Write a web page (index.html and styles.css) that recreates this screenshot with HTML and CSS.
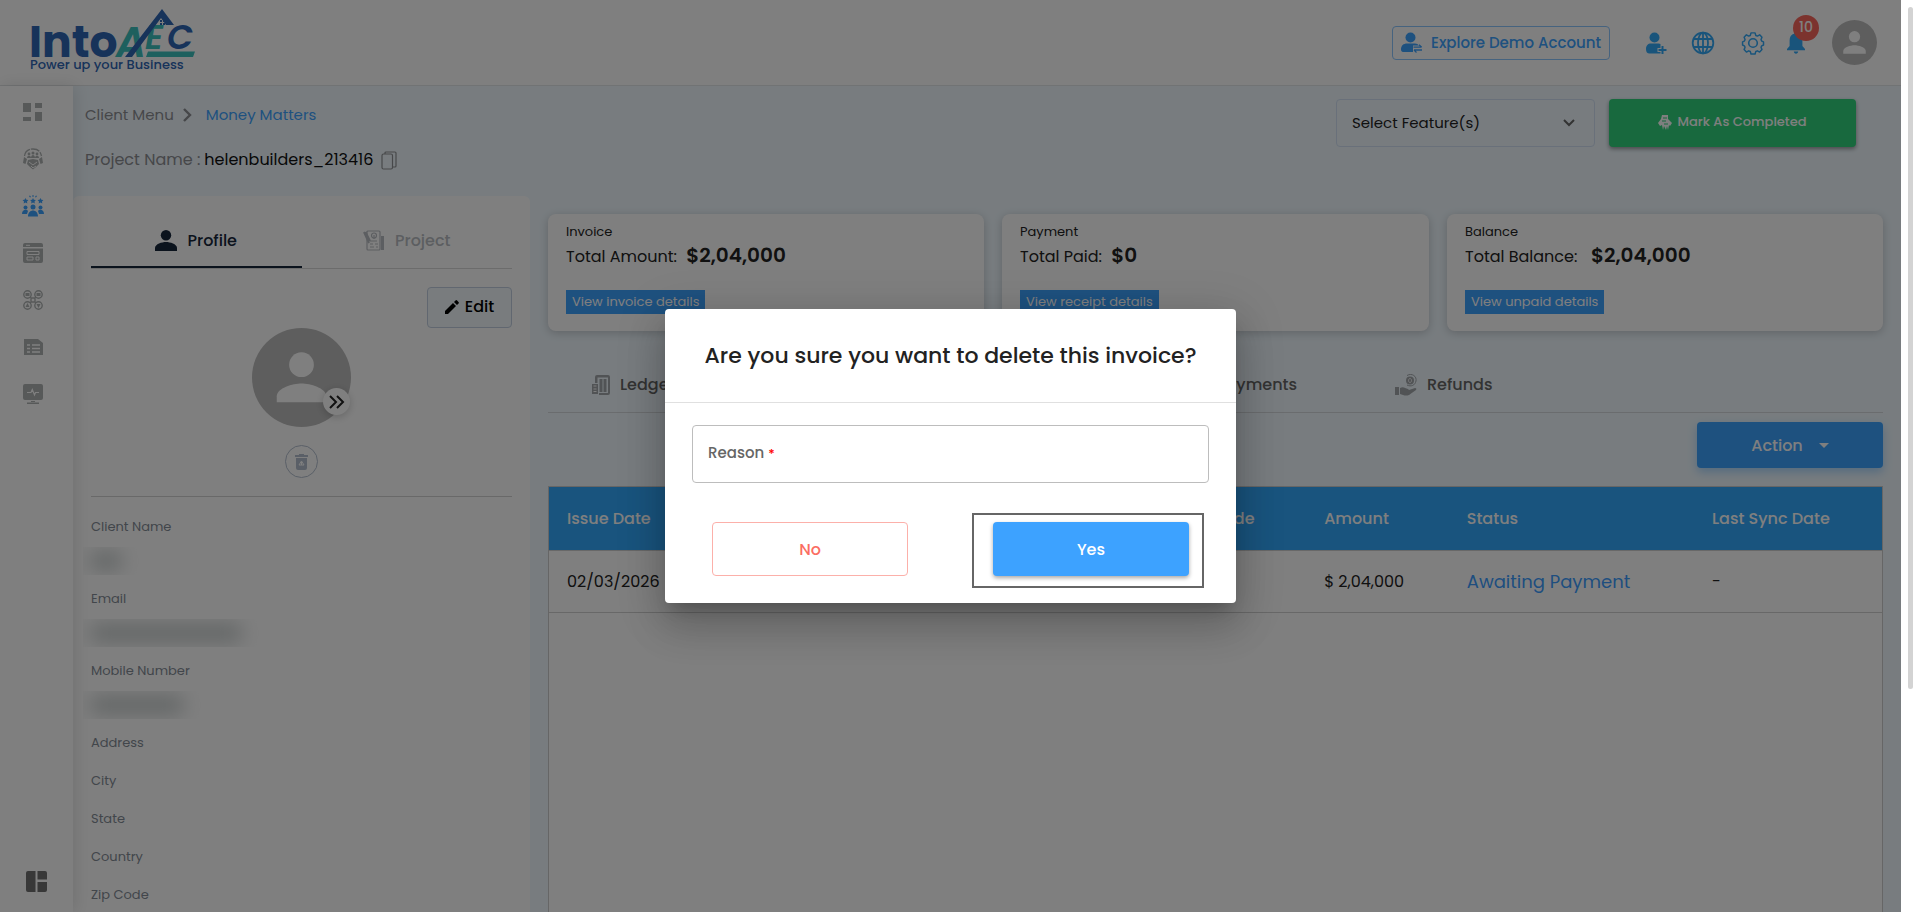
FILE: index.html
```html
<!DOCTYPE html>
<html lang="en">
<head>
    <meta charset="UTF-8">
    <meta name="viewport" content="width=device-width, initial-scale=1.0">
    <title>Money Matters</title>
    <link rel="stylesheet" href="styles.css">
</head>
<body>
    <div class="app">
        <header class="top-header">
            <a href="#" class="logo" aria-label="IntoAEC">
                <svg width="170" height="66" viewBox="0 0 170 66">
                    <text x="0" y="49" class="logo-into">Into</text>
                    <g class="logo-aec">
                        <text x="87" y="49" class="teal">A</text>
                        <text x="116" y="41" class="teal small">E</text>
                        <text x="138" y="41" class="blue small">C</text>
                    </g>
                    <path d="M119 43.500h47l-2 5.500h-47z" fill="#3cc0bd"/>
                    <path d="M96 49L133 1l12 16h-8l-5-7-29 39z" fill="#2f66b4"/>
                    <path d="M131 12h2v2h-2zM134 12h2v2h-2zM131 15h2v2h-2zM134 15h2v2h-2z" fill="#2f66b4"/>
                    <text x="1" y="61" class="logo-tagline">Power up your Business</text>
                </svg>
            </a>
            <button class="demo-btn">
                <svg width="22" height="22" viewBox="0 0 22 22" fill="currentColor"><circle cx="9.500" cy="5.500" r="5"/><path d="M0 17.500c0-4 2.500-6 6-6h8c2 0 3 .8 3.800 2H12v6.500H2c-1.200 0-2-1-2-2.500z"/><path d="M12.500 15.200h8M18 12.800l2.700 2.400M21 18h-8M15.500 20.500L13 18" stroke="currentColor" stroke-width="1.300" fill="none"/></svg>
                Explore Demo Account
            </button>
            <nav class="header-icons">
                <button class="icon-btn" aria-label="Add user"><svg width="22" height="22" viewBox="0 0 22 22" fill="currentColor"><circle cx="9.500" cy="5.500" r="5"/><path d="M1 17c0-3.500 2-5.500 5-5.500h7.500c.8 0 1.500.2 2 .6V16h-3v4h3v1.500H4.500C2.200 21.500 1 20 1 17z"/><path d="M17.500 14v8M13.500 18h8" stroke="currentColor" stroke-width="2"/></svg></button>
                <button class="icon-btn" aria-label="Language"><svg width="24" height="24" viewBox="0 0 24 24" fill="none" stroke="currentColor" stroke-width="1.800"><circle cx="12" cy="12" r="10.300"/><ellipse cx="12" cy="12" rx="5" ry="10.300"/><path d="M12 1.700v20.600M2.800 8h18.400M2.800 16h18.400"/></svg></button>
                <button class="icon-btn gear" aria-label="Settings"><svg width="24" height="24" viewBox="0 0 24 24" fill="none" stroke="currentColor" stroke-width="1.600"><circle cx="12" cy="12" r="4.300"/><path d="M9.800 1.500h4.400l.8 2.800 1.700.7 2.500-1.400 2.500 2.700-1 2.500.7 1.600 2 .9v3.400l-2 .9-.7 1.600 1 2.500-2.500 2.700-2.500-1.400-1.700.7-.8 2.800H9.800L9 21.700 7.300 21l-2.500 1.400-2.500-2.700 1-2.500-.7-1.600-2-.9v-3.400l2-.9.700-1.600-1-2.500 2.500-2.700L7.300 5 9 4.300z" transform="translate(1 .5) scale(.92)" stroke-linejoin="round"/></svg></button>
                <button class="icon-btn bell" aria-label="Notifications">
                    <svg width="20" height="22" viewBox="0 0 20 22" fill="currentColor"><path d="M10 0c-1 0-1.600.7-1.600 1.600C5 2.400 3.600 5 3.600 8.500V14L1 17v1.300h18V17l-2.600-3V8.500c0-3.500-1.400-6.100-4.800-6.900C11.600.7 11 0 10 0zM7.800 19.600c0 1.200 1 2.100 2.200 2.100s2.200-.9 2.200-2.100z"/></svg>
                    <span class="badge">10</span>
                </button>
                <button class="avatar" aria-label="Account"><svg width="45" height="45" viewBox="0 0 100 100"><circle cx="50" cy="50" r="50" fill="#bdbdbd"/><circle cx="50" cy="37" r="12.500" fill="#fff"/><path d="M25 75v-6c0-8.500 16.500-13 25-13s25 4.500 25 13v6z" fill="#fff"/></svg></button>
            </nav>
        </header>

        <div class="body-row">
            <aside class="sidebar">
                <a href="#" aria-label="Dashboard"><svg width="20" height="20" viewBox="0 0 20 20"><path d="M0 1h8v9H0zM12 1h7v5h-7zM0 15h8v4H0zM12 10h7v9h-7z"/></svg></a>
                <a href="#" aria-label="Leads"><svg width="20" height="22" viewBox="0 0 20 22"><path d="M1.500 8C2 3.500 5.500 1 10 1s7.500 2 8.500 7" fill="none" stroke="currentColor" stroke-width="1.300" stroke-dasharray="9 1"/><circle cx="6" cy="6" r="1.400"/><circle cx="10" cy="5" r="1.500"/><circle cx="14" cy="6" r="1.400"/><path d="M4 10c0-3 4-3 4 0zM8 10c0-4 4-4 4 0zM12 10c0-3 4-3 4 0zM1 9l3 2-1.500 5L0 15zM19 9l-3 2 1.500 5 2.500-1zM5 12l5-1 5 1 1 4-3 3-3 2.500L7 19l-3-3z"/><path d="M6 14l4 3 4-3M8 18l2 2 3-2" stroke="#fff" fill="none"/></svg></a>
                <a href="#" class="active" aria-label="Clients"><svg width="22" height="22" viewBox="0 0 22 22"><path d="M3.500 3l.9 1.800 2 .3L5 6.500l.3 2-1.800-1-1.800 1 .3-2L.5 5.100l2-.3zM11 3l.9 1.800 2 .3-1.400 1.400.3 2-1.800-1-1.800 1 .3-2-1.400-1.400 2-.3zM18.500 3l.9 1.800 2 .3L20 6.500l.3 2-1.800-1-1.800 1 .3-2-1.500-1.400 2-.3zM10.500 0h1v2h-1zM7 1l1-.5 1 1.500-1 .5zM14 .5l1 .5-1 1.500-1-.5z"/><circle cx="3.500" cy="12.500" r="2"/><circle cx="18.500" cy="12.500" r="2"/><circle cx="11" cy="12" r="2.500"/><path d="M0 19c0-5 5-5 6-3l-1 3zM22 19c0-5-5-5-6-3l1 3zM6 21.500c0-8 10-8 10 0z"/></svg></a>
                <a href="#" aria-label="Pages"><svg width="20" height="20" viewBox="0 0 20 20"><path d="M2 0h16q2 0 2 2v2H0V2q0-2 2-2zM0 5.500h20V18q0 2-2 2H2q-2 0-2-2z"/><path d="M4 8.500h12v3H4zM4 14h6v3H4zM13 14h3v3h-3zM3 2.300h4" fill="none" stroke="#fff"/></svg></a>
                <a href="#" aria-label="Teams"><svg width="20" height="20" viewBox="0 0 20 20"><g fill="none" stroke="currentColor" stroke-width="1.400"><circle cx="4.500" cy="4.500" r="3.700"/><circle cx="15.500" cy="4.500" r="3.700"/><circle cx="4.500" cy="15.500" r="3.700"/><circle cx="15.500" cy="15.500" r="3.700"/><path d="M7 7l1.500 1.500M13 7l-1.500 1.500M7 13l1.500-1.500M13 13l-1.500-1.500M8 8h4v4H8z"/></g><path d="M2.500 3h4v3h-4zM13.500 3h4v3h-4zM2.500 17l2-4 2 4zM13.500 14h4l-2 4z"/></svg></a>
                <a href="#" aria-label="Reports"><svg width="20" height="20" viewBox="0 0 20 20"><path d="M1 2h14l5 4v12H1z"/><path d="M4 8h3M9 8h8M4 11.500h3M9 11.500h8M4 15h3M9 15h8" stroke="#fff" stroke-width="1.300"/></svg></a>
                <a href="#" aria-label="Monitor"><svg width="20" height="20" viewBox="0 0 20 20"><path d="M2 0h16q2 0 2 2v12q0 2-2 2H2q-2 0-2-2V2q0-2 2-2zM8 17h4v1H8zM4 18.500h12V20H4z"/><path d="M4 8.500h4l1.300-3L11.500 11l1-2.500H16" fill="none" stroke="#fff" stroke-width="1.200"/></svg></a>
                <a href="#" class="toggle" aria-label="Layout"><svg width="21" height="21" viewBox="0 0 21 21"><path d="M2 0h7.500v21H2q-2 0-2-2V2q0-2 2-2zM11.500 0H19q2 0 2 2v6.500h-9.500zM11.500 11H21v8q0 2-2 2h-7.500z"/></svg></a>
            </aside>

            <div class="page">
                <div class="page-head">
                    <div class="page-title">
                        <div class="breadcrumb">
                            <a href="#">Client Menu</a>
                            <svg width="10" height="14" viewBox="0 0 10 14"><path d="M2 1l6 6-6 6" fill="none" stroke="#8d8e93" stroke-width="2.400"/></svg>
                            <a href="#" class="current">Money Matters</a>
                        </div>
                        <div class="project-name">
                            <span>Project Name :</span> helenbuilders_213416
                            <svg width="16" height="19" viewBox="0 0 16 19" fill="none" stroke="#8f9194" stroke-width="1.200"><rect x="1" y="3" width="10.500" height="15" rx="1.500"/><path d="M4 3V2q0-1 1-1h9q1 0 1 1v13q0 1-1 1h-2"/></svg>
                        </div>
                    </div>
                    <div class="feature-select">
                        <select aria-label="Features"><option>Select Feature(s)</option></select>
                        <svg width="12" height="8" viewBox="0 0 12 8"><path d="M1 1l5 5 5-5" fill="none" stroke="#666" stroke-width="2"/></svg>
                    </div>
                    <button class="complete-btn">
                        <svg width="14" height="15" viewBox="0 0 14 15" fill="currentColor"><path d="M4 0h6v4l4 4-2 3-1-1-1 5-1-4-1 4-2-4-1 4-1-5-2 1-2-3 3-4z"/><path d="M5 3h4M4 6h4M6 9h4" stroke="#2fcf7a"/></svg>
                        Mark As Completed
                    </button>
                </div>

                <div class="columns">
                    <section class="profile-panel">
                        <div class="profile-tabs">
                            <button class="profile-tab active"><svg width="22" height="21" viewBox="0 0 22 21" fill="currentColor"><circle cx="11" cy="5.200" r="5.200"/><path d="M0 21v-3c0-4 7-6 11-6s11 2 11 6v3z"/></svg>Profile</button>
                            <button class="profile-tab"><svg width="22" height="21" viewBox="0 0 22 21" fill="none" stroke="currentColor" stroke-width="1.200"><rect x="4" y="1" width="13" height="19" rx="1"/><path d="M1 2l5 11M2.500 2l4.500 9" stroke-width="2"/><circle cx="11" cy="5.500" r="2.500"/><path d="M7 11h7M7 14h3M12 14h3M7 17h4M13 17h2M11 5v4"/><path d="M19.500 6v14" stroke-width="3"/></svg>Project</button>
                        </div>
                        <div class="edit-row">
                            <button class="edit-btn"><svg width="14" height="14" viewBox="0 0 14 14"><path d="M0 11l8-8 3 3-8 8H0zM9 2l1.500-1.500q.8-.8 1.600 0l1.400 1.400q.8.800 0 1.600L12 5z"/></svg>Edit</button>
                        </div>
                        <div class="profile-photo">
                            <svg width="99" height="99" viewBox="0 0 100 100"><circle cx="50" cy="50" r="50" fill="#bdbdbd"/><circle cx="50" cy="37" r="12.500" fill="#fff"/><path d="M25 75v-6c0-8.500 16.500-13 25-13s25 4.500 25 13v6z" fill="#fff"/></svg>
                            <button class="photo-next" aria-label="Next"><svg width="16" height="14" viewBox="0 0 16 14" fill="none" stroke="#222" stroke-width="2"><path d="M1 1l6 6-6 6M8 1l6 6-6 6"/></svg></button>
                        </div>
                        <button class="trash-btn" aria-label="Delete photo"><svg width="13" height="16" viewBox="0 0 13 16" fill="#b4bfcf"><path d="M4 0h5v1h4v2H0V1h4zM1 4h11v10q0 2-2 2H3q-2 0-2-2z"/><path d="M4 11l2.500-4L9 11zM6.500 8v3" fill="none" stroke="#fff"/></svg></button>
                        <hr>
                        <div class="fields">
                            <div class="field"><span>Client Name</span><div class="masked"><i class="w-sm"></i></div></div>
                            <div class="field"><span>Email</span><div class="masked"><i class="w-lg"></i></div></div>
                            <div class="field"><span>Mobile Number</span><div class="masked"><i class="w-md"></i></div></div>
                            <div class="field"><span>Address</span></div>
                            <div class="field"><span>City</span></div>
                            <div class="field"><span>State</span></div>
                            <div class="field"><span>Country</span></div>
                            <div class="field"><span>Zip Code</span></div>
                        </div>
                    </section>

                    <main class="money">
                        <div class="cards">
                            <div class="card">
                                <h4>Invoice</h4>
                                <p>Total Amount: <strong>$2,04,000</strong></p>
                                <button>View invoice details</button>
                            </div>
                            <div class="card">
                                <h4>Payment</h4>
                                <p>Total Paid: <strong>$0</strong></p>
                                <button>View receipt details</button>
                            </div>
                            <div class="card">
                                <h4>Balance</h4>
                                <p>Total Balance:&nbsp; <strong>$2,04,000</strong></p>
                                <button>View unpaid details</button>
                            </div>
                        </div>

                        <nav class="money-tabs">
                            <a href="#"><svg width="18" height="20" viewBox="0 0 18 20"><path d="M5 0h11q2 0 2 2v16q0 2-2 2H7v-2h9V2.500H5.500V8H3V2q0-2 2-2zM0 9h6v10H0z"/><path d="M7.500 4h3v13h-3zM11.500 4h3v13h-3z"/><path d="M1.500 11h3M1.500 14h3M1.500 16.500h3" stroke="#fff"/></svg>Ledger</a>
                            <a href="#"><svg width="17" height="20" viewBox="0 0 17 20"><path d="M0 3h17v14H0z"/></svg>Payments</a>
                            <a href="#"><svg width="22" height="22" viewBox="0 0 22 22"><path d="M12 1.500c5-3 10 1 9 5.500s-5 6-9 4" fill="none" stroke="currentColor"/><circle cx="15" cy="6.500" r="4"/><path d="M15 4.500c-2 0-2 4 0 4s2-4 0-4z" fill="none" stroke="#fff" stroke-width=".8"/><path d="M0 13h4v8H0zM5 14c3-2 5 0 8 1l1 1 6-2q2 0 1 2l-7 5q-3 1-6 0l-3-1z"/></svg>Refunds</a>
                        </nav>

                        <div class="action-row">
                            <button class="action-btn">Action <span class="caret"></span></button>
                        </div>

                        <div class="table-wrap">
                            <table>
                                <thead>
                                    <tr>
                                        <th>Issue Date</th>
                                        <th>Mode</th>
                                        <th>Amount</th>
                                        <th>Status</th>
                                        <th>Last Sync Date</th>
                                    </tr>
                                </thead>
                                <tbody>
                                    <tr>
                                        <td>02/03/2026</td>
                                        <td></td>
                                        <td>$ 2,04,000</td>
                                        <td><a href="#">Awaiting Payment</a></td>
                                        <td>-</td>
                                    </tr>
                                </tbody>
                            </table>
                        </div>
                    </main>
                </div>
            </div>
        </div>

        <div class="overlay">
            <form class="dialog" role="dialog" aria-labelledby="dialogTitle">
                <h2 id="dialogTitle">Are you sure you want to delete this invoice?</h2>
                <div class="reason-box">
                    <label for="reason">Reason <b>*</b></label>
                    <input type="text" id="reason">
                </div>
                <div class="dialog-actions">
                    <button type="button" class="btn-no">No</button>
                    <div class="yes-frame"><button type="button" class="btn-yes">Yes</button></div>
                </div>
            </form>
        </div>
    </div>
    <div class="scroll-track"><div class="scroll-thumb"></div></div>
</body>
</html>
```
FILE: styles.css
```css
* {
    box-sizing: border-box;
}
body {
    font-family: 'Poppins', 'Inter', sans-serif;
    margin: 0;
    color: #222;
    font-size: 16px;
    display: flex;
    height: 100vh;
    overflow: hidden;
}
button {
    font-family: inherit;
    cursor: pointer;
    border: none;
    background: none;
    padding: 0;
    display: flex;
    align-items: center;
    justify-content: center;
}
a {
    text-decoration: none;
    color: inherit;
}
svg {
    display: block;
    flex-shrink: 0;
}
.app {
    flex: 1;
    min-width: 0;
    display: flex;
    flex-direction: column;
    position: relative;
    background: #f0f9ff;
    overflow: hidden;
}
.scroll-track {
    width: 19px;
    background: #fff;
    padding: 7px;
}
.scroll-thumb {
    width: 5px;
    height: 76%;
    border-radius: 3px;
    background: #d3d3d3;
}

/* header */
.top-header {
    height: 86px;
    flex-shrink: 0;
    background: #fff;
    border-bottom: 1px solid #e3e6e8;
    display: flex;
    align-items: center;
    padding: 0 24px 0 29px;
}
.logo {
    margin-right: auto;
    margin-bottom: 3px;
}
.logo text {
    font-weight: 700;
}
.logo-into {
    font-size: 44px;
    fill: #2f66b4;
}
.logo-aec text {
    font-size: 42px;
    font-weight: 600;
    font-style: italic;
}
.logo-aec .small {
    font-size: 34px;
}
.logo-aec .teal {
    fill: #3cc0bd;
}
.logo-aec .blue {
    fill: #2f66b4;
}
.logo .logo-tagline {
    font-size: 13px;
    font-weight: 500;
    fill: #2f66b4;
}
.demo-btn {
    height: 34px;
    border: 1px solid #8cc6ff;
    border-radius: 4px;
    color: #3da2ff;
    font-size: 15px;
    font-weight: 500;
    padding: 0 8px;
    gap: 8px;
    margin-right: 34px;
}
.header-icons {
    display: flex;
    align-items: center;
    gap: 23px;
}
.icon-btn {
    color: #33a9f7;
    position: relative;
    width: 24px;
}
.icon-btn.gear {
    margin-left: 3px;
}
.icon-btn.bell {
    margin-right: 1px;
    margin-left: -4px;
}
.badge {
    position: absolute;
    left: 9px;
    top: -17px;
    width: 26px;
    height: 26px;
    border-radius: 50%;
    background: #f9665c;
    color: #fff;
    font-size: 14px;
    line-height: 24px;
    font-weight: 500;
}

/* sidebar */
.body-row {
    flex: 1;
    display: flex;
    min-height: 0;
}
.sidebar {
    width: 73px;
    flex-shrink: 0;
    background: #fff;
    box-shadow: 2px 0 16px rgba(0, 0, 0, 0.12);
    display: flex;
    flex-direction: column;
    gap: 17px;
    padding: 11px 0 19px 18px;
    z-index: 1;
    color: #aeb2b2;
}
.sidebar a {
    width: 30px;
    height: 30px;
    display: flex;
    align-items: center;
    justify-content: center;
}
.sidebar svg {
    fill: currentColor;
}
.sidebar .active {
    color: #3da2ff;
}
.sidebar .toggle {
    color: #707070;
    margin-top: auto;
    width: 36px;
    height: 24px;
}

/* page head */
.page {
    flex: 1;
    min-width: 0;
    display: flex;
    flex-direction: column;
}
.page-head {
    height: 110px;
    flex-shrink: 0;
    display: flex;
    align-items: flex-start;
    padding: 13px 45px 0 12px;
}
.page-title {
    margin-right: auto;
    color: #8d8e93;
}
.breadcrumb {
    display: flex;
    align-items: center;
    gap: 8px;
    font-size: 15px;
    line-height: 32px;
}
.breadcrumb .current {
    color: #3da2ff;
    margin-left: 6px;
}
.project-name {
    display: flex;
    align-items: center;
    gap: 4px;
    line-height: 24px;
    margin-top: 17px;
    color: #111;
}
.project-name span {
    color: #8d8e93;
}
.project-name svg {
    margin-left: 4px;
}
.feature-select {
    position: relative;
    margin-right: 14px;
}
.feature-select select {
    appearance: none;
    width: 259px;
    height: 48px;
    border: 1px solid #d3e0f5;
    border-radius: 4px;
    background: transparent;
    font: inherit;
    font-size: 15px;
    color: #222;
    padding: 0 15px 2px;
}
.feature-select svg {
    position: absolute;
    right: 20px;
    top: 20px;
}
.complete-btn {
    width: 247px;
    height: 48px;
    padding-bottom: 2px;
    border-radius: 4px;
    background: #31d37c;
    color: #fff;
    font-size: 13px;
    font-weight: 500;
    gap: 5px;
    box-shadow: 0 2px 4px rgba(0, 0, 0, 0.4);
}

/* profile panel */
.columns {
    flex: 1;
    display: flex;
    min-height: 0;
}
.profile-panel {
    width: 25%;
    flex-shrink: 0;
    background: #fff;
    border-radius: 6px 6px 0 0;
    padding: 18px;
    overflow: hidden;
}
.profile-tabs {
    display: grid;
    grid-template-columns: 1fr 1fr;
    border-bottom: 1px solid #d8d8d8;
}
.profile-tab {
    height: 54px;
    gap: 10px;
    font-size: 16px;
    font-weight: 500;
    color: #b9bdc2;
    border-bottom: 2px solid transparent;
}
.profile-tab.active {
    color: #16263b;
    border-color: #16263b;
}
.edit-row {
    display: flex;
    justify-content: flex-end;
    margin-top: 18px;
}
.edit-btn {
    width: 85px;
    height: 41px;
    padding-bottom: 2px;
    border: 1px solid #c2cfe0;
    border-radius: 4px;
    background: #f3f8fd;
    font-size: 16px;
    font-weight: 500;
    gap: 6px;
    color: #000;
}
.profile-photo {
    width: 99px;
    margin: 0 auto;
    position: relative;
}
.photo-next {
    position: absolute;
    right: 1px;
    bottom: 12px;
    width: 27px;
    height: 27px;
    border-radius: 50%;
    background: #fff;
    box-shadow: 0 2px 8px rgba(0, 0, 0, 0.2);
}
.trash-btn {
    width: 33px;
    height: 33px;
    border: 1px solid #b4bfcf;
    border-radius: 50%;
    margin: 18px auto;
}
hr {
    border: none;
    border-top: 1px solid #d3d3d3;
    margin: 0 0 20px;
}
.field {
    font-size: 13px;
    line-height: 20px;
    color: #848c96;
    margin-bottom: 18px;
}
.masked {
    height: 28px;
    margin: 10px 0 -4px -8px;
    overflow: hidden;
    padding: 6px 8px;
}
.masked i {
    display: block;
    height: 16px;
    background: #bcc3c3;
    filter: blur(10px);
}
.w-sm {
    width: 30px;
}
.w-md {
    width: 92px;
}
.w-lg {
    width: 150px;
}

/* money matters */
.money {
    flex: 1;
    min-width: 0;
    padding: 18px 18px 0;
    display: flex;
    flex-direction: column;
}
.cards {
    display: grid;
    grid-template-columns: 436fr 427fr 436fr;
    gap: 18px;
}
.card {
    background: #fff;
    border-radius: 8px;
    box-shadow: 0 2px 10px rgba(0, 0, 0, 0.2);
    padding: 8px 18px 17px;
}
.card h4 {
    margin: 0;
    font-size: 13px;
    font-weight: 400;
    line-height: 20px;
}
.card p {
    margin: 0 0 18px;
    line-height: 30px;
}
.card strong {
    font-size: 20px;
    line-height: 20px;
    font-weight: 600;
    margin-left: 5px;
}
.card button {
    height: 24px;
    background: #3da2ff;
    color: #fff;
    font-size: 13px;
    padding: 0 6px;
}
.money-tabs {
    display: grid;
    grid-template-columns: 597fr 206fr 532fr;
    height: 56px;
    margin-top: 26px;
    border-bottom: 1px solid #d5d9dc;
}
.money-tabs a {
    display: flex;
    align-items: center;
    gap: 10px;
    padding-left: 44px;
    font-weight: 500;
    color: #666;
}
.money-tabs svg {
    fill: currentColor;
    color: #a3a7ab;
}
.action-row {
    display: flex;
    justify-content: flex-end;
    padding: 9px 0 18px;
}
.action-btn {
    width: 186px;
    height: 46px;
    border-radius: 4px;
    background: #3da2ff;
    color: #fff;
    font-size: 16px;
    font-weight: 500;
    gap: 16px;
    box-shadow: 0 4px 10px rgba(61, 162, 255, 0.4);
}
.caret {
    border: 5px solid transparent;
    border-top-color: #fff;
    border-bottom: none;
}
.table-wrap {
    flex: 1;
    background: #fff;
    border: 1px solid #ccc;
    border-bottom: none;
}
table {
    width: 100%;
    table-layout: fixed;
    border-collapse: collapse;
}
th,
td {
    text-align: left;
    padding: 0 18px;
    border-bottom: 1px solid #d0d0d0;
    height: 62px;
}
th {
    height: 63px;
    background: #33a9fc;
    color: #fff;
    font-weight: 500;
}
th:nth-child(1) {
    width: 48.2%;
}
th:nth-child(2) {
    width: 8.6%;
}
th:nth-child(3) {
    width: 10.7%;
}
th:nth-child(4) {
    width: 18.4%;
}
td a {
    font-size: 18px;
    color: #3d9dff;
}

/* delete dialog */
.overlay {
    position: absolute;
    inset: 0;
    z-index: 10;
    background: rgba(0, 0, 0, 0.5);
    display: flex;
    align-items: center;
    justify-content: center;
}
.dialog {
    width: 571px;
    background: #fff;
    border-radius: 4px;
    box-shadow: 0 11px 15px -7px rgba(0, 0, 0, 0.2), 0 24px 38px 3px rgba(0, 0, 0, 0.14), 0 9px 46px 8px rgba(0, 0, 0, 0.12);
}
.dialog h2 {
    margin: 0;
    font-size: 22px;
    font-weight: 500;
    line-height: 93px;
    text-align: center;
    border-bottom: 1px solid #e0e0e0;
}
.reason-box {
    display: flex;
    align-items: center;
    height: 58px;
    margin: 22px 27px 30px;
    padding: 0 15px;
    border: 1px solid #bdbdbd;
    border-radius: 4px;
}
.reason-box label {
    font-size: 15px;
    font-weight: 500;
    color: #666;
    margin-bottom: 4px;
}
.reason-box b {
    font-size: 13px;
    font-weight: 500;
    color: #f00;
}
.reason-box input {
    flex: 1;
    border: none;
    outline: none;
    font: inherit;
}
.dialog-actions {
    display: flex;
    align-items: center;
    justify-content: space-between;
    padding: 0 32px 15px 47px;
}
.btn-no,
.btn-yes {
    width: 196px;
    height: 54px;
    border-radius: 4px;
    font-size: 16px;
    font-weight: 500;
}
.btn-no {
    border: 1px solid #fcb0aa;
    color: #fb6d62;
    margin-bottom: 3px;
}
.btn-yes {
    background: #3da2ff;
    color: #fff;
    box-shadow: 0 2px 4px rgba(0, 0, 0, 0.35);
}
.yes-frame {
    border: 2px solid #666;
    padding: 7px 13px 10px 19px;
}
```
